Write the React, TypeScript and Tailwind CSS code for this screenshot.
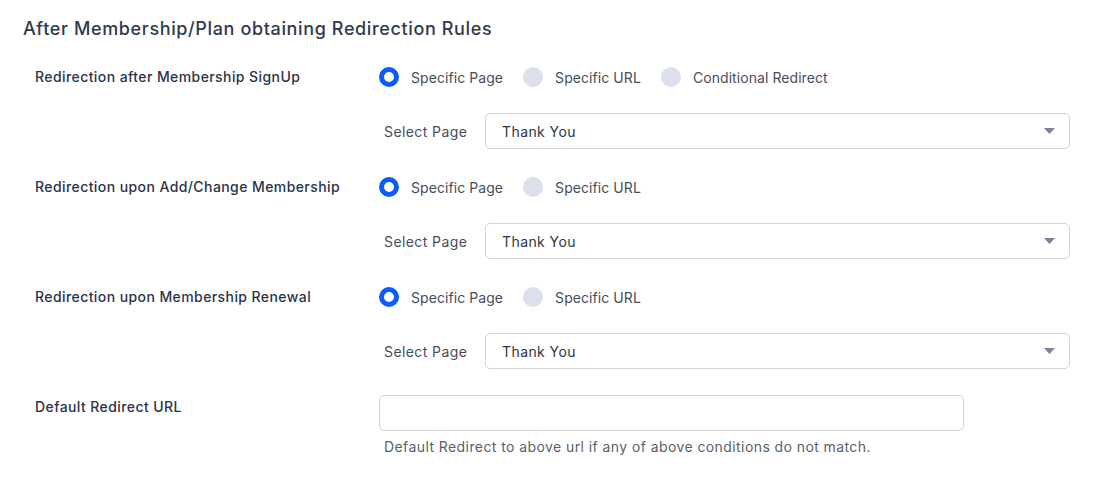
import React from "react";

interface RadioOption {
  label: string;
  checked?: boolean;
}

interface RuleRowProps {
  title: string;
  options: RadioOption[];
  page: string;
}

const Radio: React.FC<RadioOption> = ({ label, checked }) => (
  <label className="flex items-center gap-[12px] mr-[20px]">
    {checked ? (
      <span className="w-[20px] h-[20px] rounded-full border-[5px] border-[#0b5cff] bg-white" />
    ) : (
      <span className="w-[20px] h-[20px] rounded-full bg-[#dce0ec]" />
    )}
    <span className="text-[14px] text-[#474d5c] tracking-[0.005em]">{label}</span>
  </label>
);

const SelectBox: React.FC<{ value: string }> = ({ value }) => (
  <div className="flex-1 h-[36px] border border-[#cfd3e0] rounded-[5px] flex items-center justify-between pl-[16px] pr-[14px] bg-white">
    <span className="text-[14px] text-[#2f3545]">{value}</span>
    <svg width="11" height="6" viewBox="0 0 11 6">
      <path d="M0 0h11L5.5 6z" fill="#7d82a0" />
    </svg>
  </div>
);

const RuleRow: React.FC<RuleRowProps> = ({ title, options, page }) => (
  <div className="flex">
    <div className="w-[344px] h-[20px] leading-[20px] text-[14px] font-medium text-[#2b3447]">{title}</div>
    <div className="flex-1 flex flex-col">
      <div className="flex items-center h-[20px]">
        {options.map((o) => (
          <Radio key={o.label} {...o} />
        ))}
      </div>
      <div className="flex items-center mt-[26px] mb-[28px] pl-[5px]">
        <span className="w-[101px] text-[14px] text-[#474d5c]">Select Page</span>
        <SelectBox value={page} />
      </div>
    </div>
  </div>
);

export default function App() {
  const rules: RuleRowProps[] = [
    {
      title: "Redirection after Membership SignUp",
      options: [
        { label: "Specific Page", checked: true },
        { label: "Specific URL" },
        { label: "Conditional Redirect" },
      ],
      page: "Thank You",
    },
    {
      title: "Redirection upon Add/Change Membership",
      options: [{ label: "Specific Page", checked: true }, { label: "Specific URL" }],
      page: "Thank You",
    },
    {
      title: "Redirection upon Membership Renewal",
      options: [{ label: "Specific Page", checked: true }, { label: "Specific URL" }],
      page: "Thank You",
    },
  ];

  return (
    <div
      className="w-[1103px] h-[481px] bg-white pl-[23px] pt-[16px] pr-[33px] tracking-[0.026em]"
      style={{ fontFamily: "Inter, 'Noto Sans', sans-serif" }}
    >
      <h2 className="text-[18px] font-medium text-[#2f3a4e] leading-[26px] tracking-[0.035em]">
        After Membership/Plan obtaining Redirection Rules
      </h2>
      <div className="pl-[12px] mt-[25px]">
        {rules.map((r) => (
          <RuleRow key={r.title} {...r} />
        ))}
        <div className="flex">
          <div className="w-[344px] h-[20px] leading-[20px] text-[14px] font-medium text-[#2b3447]">
            Default Redirect URL
          </div>
          <div className="flex flex-col">
            <input className="w-[585px] h-[36px] border border-[#cfd3e0] rounded-[5px] -mt-[2px] outline-none px-3" />
            <span className="text-[14px] text-[#5a5f6b] mt-[5px] pl-[5px]">
              Default Redirect to above url if any of above conditions do not match.
            </span>
          </div>
        </div>
      </div>
    </div>
  );
}
